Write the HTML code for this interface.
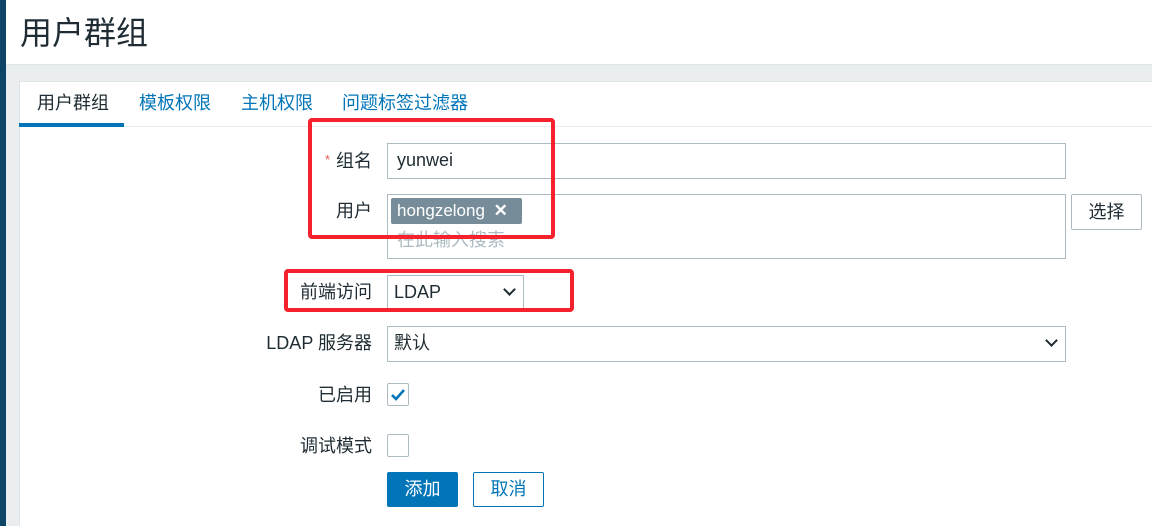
<!DOCTYPE html>
<html><head><meta charset="utf-8"><style>
*{box-sizing:border-box;margin:0;padding:0}
body{width:1152px;height:526px;overflow:hidden;background:#ebeef0;font-family:"Liberation Sans","Noto Sans CJK SC",sans-serif;position:relative;color:#1f2c33}
.a{position:absolute}
.t{position:absolute;font-size:18px;line-height:20px;white-space:nowrap}
.lbl{position:absolute;right:780px;font-size:18px;line-height:20px;text-align:right;white-space:nowrap}
.in{position:absolute;border:1px solid #acbbc2;background:#fff}
.chev{position:absolute;width:9px;height:9px;border-right:2px solid #1f2c33;border-bottom:2px solid #1f2c33;transform:rotate(45deg)}
</style></head><body>
<div class="a" style="left:0;top:0;width:6px;height:526px;background:#0e4466"></div>
<div class="a" style="left:6px;top:0;width:1146px;height:65px;background:#fff;border-bottom:1px solid #dfe4e7"></div>
<div class="a" style="left:20px;top:14px;font-size:32px;line-height:38px;color:#1f2c33">用户群组</div>
<div class="a" style="left:19px;top:81px;width:1133px;height:445px;background:#fff;border-left:1px solid #dfe4e7;border-top:1px solid #dfe4e7"></div>
<div class="a" style="left:19px;top:126px;width:1133px;height:1px;background:#ebeef0"></div>
<div class="a" style="left:19px;top:123px;width:105px;height:4px;background:#0275b8"></div>
<div class="t" style="left:37px;top:93px;color:#1f2c33">用户群组</div>
<div class="t" style="left:139px;top:93px;color:#0275b8">模板权限</div>
<div class="t" style="left:241px;top:93px;color:#0275b8">主机权限</div>
<div class="t" style="left:342px;top:93px;color:#0275b8">问题标签过滤器</div>

<div class="lbl" style="top:150px"><span style="color:#e45959;font-size:13px;vertical-align:3px;margin-right:6px">*</span>组名</div>
<div class="in" style="left:387px;top:143px;width:679px;height:36px"></div>
<div class="t" style="left:397px;top:150px">yunwei</div>

<div class="lbl" style="top:201px">用户</div>
<div class="in" style="left:387px;top:194px;width:679px;height:65px"></div>
<div class="a" style="left:391px;top:198px;width:131px;height:26px;background:#768d99;border-radius:2px;color:#fff;font-size:17px;line-height:26px;padding-left:6px;white-space:nowrap">hongzelong <span style="font-weight:bold;margin-left:4px">✕</span></div>
<div class="t" style="left:397px;top:230px;color:#acbbc2">在此输入搜索</div>
<div class="a" style="left:1071px;top:194px;width:71px;height:36px;border:1px solid #acbbc2;border-radius:2px;background:#fff;font-size:18px;line-height:34px;text-align:center">选择</div>

<div class="lbl" style="top:282px">前端访问</div>
<div class="in" style="left:387px;top:275px;width:137px;height:35px"></div>
<div class="t" style="left:394px;top:282px">LDAP</div>
<div class="chev" style="left:505px;top:285px"></div>

<div class="lbl" style="top:333px">LDAP 服务器</div>
<div class="in" style="left:387px;top:326px;width:679px;height:36px"></div>
<div class="t" style="left:394px;top:333px">默认</div>
<div class="chev" style="left:1047px;top:336px"></div>

<div class="lbl" style="top:385px">已启用</div>
<div class="in" style="left:387px;top:383px;width:22px;height:23px;border-radius:2px"></div>
<svg class="a" style="left:389px;top:386px" width="18" height="18"><path d="M3 9 L7 13 L15 4" stroke="#0275b8" stroke-width="2.6" fill="none"/></svg>

<div class="lbl" style="top:436px">调试模式</div>
<div class="in" style="left:387px;top:434px;width:22px;height:23px;border-radius:2px"></div>

<div class="a" style="left:387px;top:472px;width:71px;height:35px;background:#0275b8;border-radius:2px;color:#fff;font-size:18px;line-height:35px;text-align:center">添加</div>
<div class="a" style="left:473px;top:472px;width:71px;height:35px;border:1px solid #0275b8;border-radius:2px;color:#0275b8;font-size:18px;line-height:33px;text-align:center;background:#fff">取消</div>

<div class="a" style="left:308px;top:118px;width:247px;height:121px;border:4px solid #f5222d;border-radius:4px"></div>
<div class="a" style="left:284px;top:269px;width:290px;height:43px;border:4px solid #f5222d;border-radius:4px"></div>
</body></html>
